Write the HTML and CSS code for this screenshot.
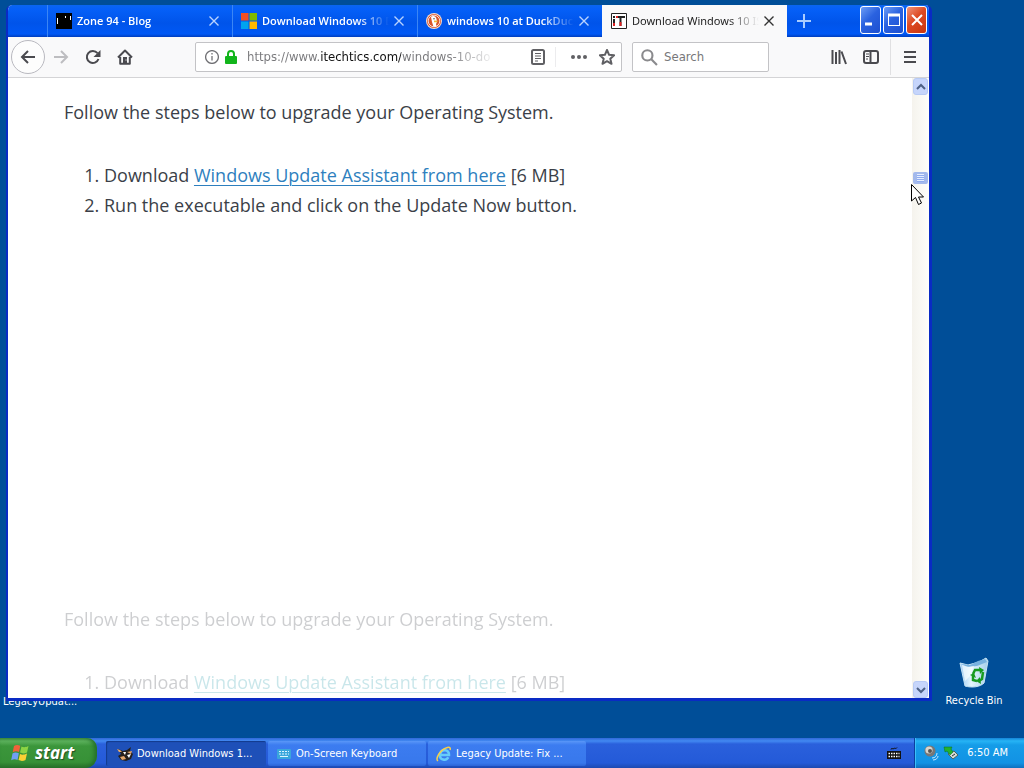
FILE: index.html
```html
<!DOCTYPE html>
<html lang="en">
<head>
<meta charset="utf-8">
<meta name="viewport" content="width=device-width, initial-scale=1">
<title>Download Windows 10 ISO</title>
<link rel="stylesheet" href="styles.css">
</head>
<body>
<main class="desktop">
  <span class="shortcut-legacy">LegacyUpdat...</span>
  <section class="window">
    <header class="titlebar">
      <div class="tabs">
        <div class="tab">
          <button class="tab-label">
            <svg class="favicon" viewBox="0 0 16 16"><path fill="#000" d="M0 0h16v16H0z"/><path stroke="#fff" d="M1.500 5v6M9.500 3v2M14.500 3v4"/></svg>
            <span class="tab-title">Zone 94 - Blog</span>
          </button>
          <button class="tab-close" aria-label="Close tab"><svg viewBox="0 0 10 10"><path d="M.5.5l9 9M9.500.5l-9 9"/></svg></button>
        </div>
        <div class="tab">
          <button class="tab-label">
            <svg class="favicon" viewBox="0 0 16 16"><path fill="#f25022" d="M0 0h7.500v7.500H0z"/><path fill="#7fba00" d="M8.500 0H16v7.500H8.500z"/><path fill="#00a4ef" d="M0 8.500h7.500V16H0z"/><path fill="#ffb900" d="M8.500 8.500H16V16H8.500z"/></svg>
            <span class="tab-title">Download Windows 10 Dis</span>
          </button>
          <button class="tab-close" aria-label="Close tab"><svg viewBox="0 0 10 10"><path d="M.5.5l9 9M9.500.5l-9 9"/></svg></button>
        </div>
        <div class="tab">
          <button class="tab-label">
            <svg class="favicon" viewBox="0 0 16 16"><circle cx="8" cy="8" r="8" fill="#f7ddd0"/><circle cx="8" cy="8" r="7" fill="#d9542b"/><circle cx="8" cy="8" r="5.800" fill="none" stroke="#fff" stroke-width=".8"/><path fill="#fff" d="M5 4c2-2 5-1 5.500 2l.5 3-1 2 .5 2.500-3 .3L6 9z"/><path fill="#f3b632" d="M8 7.500l4 .3-1 1.500H8z"/><circle cx="8" cy="5.700" r=".7" fill="#333"/></svg>
            <span class="tab-title">windows 10 at DuckDuckG</span>
          </button>
          <button class="tab-close" aria-label="Close tab"><svg viewBox="0 0 10 10"><path d="M.5.5l9 9M9.500.5l-9 9"/></svg></button>
        </div>
        <div class="tab tab-active">
          <button class="tab-label">
            <svg class="favicon" viewBox="0 0 16 16"><path fill="#fff" stroke="#222" d="M.5.5h15v15H.5z"/><path fill="#222" d="M2 3h2v2H2zM2 6h2v7H2zM5 3h9v2h-3.500v8h-2V5H5z"/><path fill="#d22" d="M2 10h2v3H2zM8.500 9h2v4h-2zM5 3h2v2H5z"/></svg>
            <span class="tab-title">Download Windows 10 ISO</span>
          </button>
          <button class="tab-close" aria-label="Close tab"><svg viewBox="0 0 10 10"><path d="M.5.5l9 9M9.500.5l-9 9"/></svg></button>
        </div>
        <button class="new-tab" aria-label="New tab"><svg viewBox="0 0 14 14"><path d="M7 0v14M0 7h14"/></svg></button>
      </div>
      <div class="controls">
        <button class="control" aria-label="Minimize"><svg viewBox="0 0 16 20"><path d="M2 14h7" stroke-width="3"/></svg></button>
        <button class="control" aria-label="Maximize"><svg viewBox="0 0 16 20"><path d="M2.500 15.500v-11M2 15.500h12M13.500 4.500v11" stroke-width="1"/><path d="M2 5h12" stroke-width="3"/></svg></button>
        <button class="control control-close" aria-label="Close"><svg viewBox="0 0 16 20"><path d="M3 5l10 10M13 5L3 15" stroke-width="2"/></svg></button>
      </div>
    </header>

    <nav class="toolbar">
      <button class="tool tool-back" aria-label="Back"><svg viewBox="0 0 16 16"><path d="M15 8H2M8 2L2 8l6 6"/></svg></button>
      <button class="tool tool-off" aria-label="Forward"><svg viewBox="0 0 16 16"><path d="M1 8h13M8 2l6 6-6 6"/></svg></button>
      <button class="tool" aria-label="Reload"><svg viewBox="0 0 16 16"><path d="M12.500 4.200A6 6 0 1 0 13.500 10"/><path class="solid" d="M15.500 1v7h-7z"/></svg></button>
      <button class="tool" aria-label="Home"><svg viewBox="0 0 16 16"><path d="M1 8.500L8 1.500l7 7M3.200 8v6.800h9.600V8" stroke-linejoin="round"/><path class="solid" d="M6 8h4v7H6z"/><path d="M8.500 11h1" stroke="#fff" stroke-width="1"/></svg></button>
      <span class="spacer"></span>
      <div class="urlbar">
        <svg class="info" viewBox="0 0 14 14"><circle cx="7" cy="7" r="6.400"/><path d="M7 6v4.500M7 3v1.500"/></svg>
        <svg class="lock" viewBox="0 0 12 14"><path d="M3 7V4a3 3 0 0 1 6 0v3" fill="none" stroke="#12b51b" stroke-width="2"/><rect y="6" width="12" height="8" rx="1" fill="#12b51b"/></svg>
        <input class="url" type="text" aria-label="Address" value="https://www.itechtics.com/windows-10-do">
        <button class="url-tool" aria-label="Reader view"><svg viewBox="0 0 16 16"><rect x="2" y="1" width="12" height="14" rx="1.500"/><path d="M5 4.500h6M5 7h6M5 9.500h6M5 12h3" stroke-width="1"/></svg></button>
        <span class="url-line"></span>
        <button class="url-tool" aria-label="Page actions"><svg viewBox="0 0 16 16"><g class="solid"><circle cx="2" cy="8" r="2"/><circle cx="8" cy="8" r="2"/><circle cx="14" cy="8" r="2"/></g></svg></button>
        <button class="url-tool" aria-label="Bookmark"><svg viewBox="0 0 16 16"><path stroke-linejoin="round" d="M8 1l2.100 4.800 5 .5-3.800 3.500 1.200 5L8 12.200l-4.500 2.600 1.200-5L.9 6.300l5-.5z"/></svg></button>
      </div>
      <label class="search">
        <svg viewBox="0 0 16 16"><circle cx="6" cy="6" r="4.800"/><path d="M9.500 9.500L15 15"/></svg>
        <input type="search" placeholder="Search" aria-label="Search">
      </label>
      <span class="spacer"></span>
      <button class="tool" aria-label="Library"><svg viewBox="0 0 16 16"><path d="M1.500 1v14M5 3v12M8.500 1v14M10.500 2.500L15 15"/></svg></button>
      <button class="tool" aria-label="Sidebars"><svg viewBox="0 0 16 16"><rect x="1" y="2" width="14" height="12" rx="2"/><path d="M7.500 2v12"/><path d="M3 5h3M3 7.500h3M3 10h2" stroke-width="1"/></svg></button>
      <span class="menu-line"></span>
      <button class="tool" aria-label="Menu"><svg viewBox="0 0 16 16"><path d="M2 3h12M2 8h12M2 13h12"/></svg></button>
    </nav>

    <div class="viewport">
      <article class="page">
        <p>Follow the steps below to upgrade your Operating System.</p>
        <ol>
          <li>Download <a href="#">Windows Update Assistant from here</a> [6 MB]</li>
          <li>Run the executable and click on the Update Now button.</li>
        </ol>
        <div class="ghost" aria-hidden="true">
          <p>Follow the steps below to upgrade your Operating System.</p>
          <ol>
            <li>Download <a href="#" tabindex="-1">Windows Update Assistant from here</a> [6 MB]</li>
          </ol>
        </div>
      </article>
      <div class="scrollbar">
        <button class="scroll-button" aria-label="Scroll up"><svg viewBox="0 0 10 10"><path d="M1 7l4-4 4 4"/></svg></button>
        <div class="track"><span class="thumb"></span></div>
        <button class="scroll-button" aria-label="Scroll down"><svg viewBox="0 0 10 10"><path d="M1 3l4 4 4-4"/></svg></button>
      </div>
    </div>
  </section>

  <a class="recycle" href="#">
    <svg viewBox="0 0 32 34">
      <defs><linearGradient id="bin" x2="1"><stop stop-color="#9cc9f5"/><stop offset=".4" stop-color="#e4f5fc"/><stop offset="1" stop-color="#a6cfea"/></linearGradient></defs>
      <path fill="url(#bin)" stroke="#c6e4f5" d="M2 7l8 2 11-3 7-4 2 3-4 22c-4 4-12 5-19 3z"/>
      <path fill="#78b2df" d="M3 8l9 1 8-4 7-2 2 3-10 4-10 1z"/>
      <path fill="#f6fdff" d="M4 9l7 2 5-1-4 10-5 5z" opacity=".7"/>
      <g fill="none" stroke="#189a20" stroke-width="2.500"><path d="M15 18l2-4 6 0M25 16l-1 7-3 2M19 25l-4-1 0-4"/></g>
      <path fill="#189a20" d="M21 11l5 3-4 4zM22 21l-4 4 5 3zM12 19l4-2 2 5z"/>
    </svg>
    <span>Recycle Bin</span>
  </a>
  <svg class="cursor" viewBox="0 0 14 22"><path fill="#fff" stroke="#000" d="M.5.5v16.500l4-3.500 3 7 3-1.500-3-6h5z"/></svg>
</main>

<footer class="taskbar">
  <button class="start">
    <svg viewBox="0 0 20 20"><path fill="#f0623a" d="M3 3c2-1.500 4-1.300 6.300-.2L8 9c-2-1-4-1-6.300.2z"/><path fill="#8bd344" d="M10.500 3.500c2 1 4 1 7-.5L16 9.500c-2.500 1.200-4.500 1.200-7 .1z"/><path fill="#6f9ff5" d="M1.500 10.500c2-1.500 4-1.300 6.300-.2L6.500 17c-2-1-4-1-6.300.2z"/><path fill="#fbd034" d="M9 11c2 1 4 1 7-.5L14.500 17c-2.500 1.200-4.500 1.200-7 .1z"/></svg>
    <span>start</span>
  </button>
  <div class="tasks">
    <button class="task task-active">
      <svg viewBox="0 0 16 16"><path fill="#26201c" d="M1 3l5 2 4-1 4-3-1 4 3 3-2 5-5 2-5-1-3-4 3-2z"/><path fill="#e5a66a" d="M0 3l3 1 2 2-3 0zM10 6l5-1-1 3zM3 11l4-1 2 3-4 1z"/><path fill="#fff" d="M6 6l3 0-1 3zM10 9l4-1-2 4z"/></svg>
      <span>Download Windows 1...</span>
    </button>
    <button class="task">
      <svg viewBox="0 0 16 16"><rect x="1" y="3" width="14" height="10" rx="1" fill="#3aa6dc"/><path stroke="#dff6ff" stroke-dasharray="2 1" d="M3 5.500h10M3 8h10"/><path stroke="#dff6ff" d="M4 10.500h8"/></svg>
      <span>On-Screen Keyboard</span>
    </button>
    <button class="task">
      <svg viewBox="0 0 16 16"><path fill="none" stroke="#67cdfa" stroke-width="2.600" d="M4 9h9c.5-6-8-6.500-9-.5-.8 6 6.500 6.500 8.300 2.800"/><path fill="none" stroke="#f6cf4c" stroke-width="1.500" d="M2 15c-3-2 2-11 8-13 3-1.200 5-.8 4 2"/></svg>
      <span>Legacy Update: Fix ...</span>
    </button>
  </div>
  <button class="keyboard" aria-label="Keyboard"><svg viewBox="0 0 14 14"><path fill="none" stroke="#111" d="M4 3.500c0-2 2 0 3-1s2 1 3-1"/><path fill="#111" d="M0 5h14v8H0z"/><path stroke="#fff" stroke-width="1.500" stroke-dasharray="1.500 1" d="M1.500 7.500h11M1.500 10.500h11"/></svg></button>
  <div class="tray">
    <svg viewBox="0 0 16 16"><circle cx="7" cy="6" r="5.500" fill="#777"/><circle cx="6" cy="5" r="3.600" fill="#d8d5cc"/><circle cx="7" cy="6" r="2" fill="#555"/><path fill="none" stroke="#c8e8ff" d="M9 13c3 0 5-2 5-5M10 15c3 0 5-2 5-4"/></svg>
    <svg viewBox="0 0 16 16"><path fill="#d4dcd6" stroke="#52655b" d="M5 9l6-3 4 4-5 4z"/><path fill="#23b32d" stroke="#0b6e1c" stroke-width=".5" d="M1 2l8 0-1 2 2 3-3 3-3-4-2 1z"/><path stroke="#333" d="M9 11l3-2"/></svg>
    <time>6:50 AM</time>
  </div>
</footer>
</body>
</html>
```
FILE: styles.css
```css
* { box-sizing: border-box; }
html, body { height: 100%; }
body {
  margin: 0;
  display: flex;
  flex-direction: column;
  overflow: hidden;
  background: #004e98;
  font: 11px/16px "DejaVu Sans Condensed", "Noto Sans", sans-serif;
}
button {
  display: flex;
  align-items: center;
  justify-content: center;
  padding: 0;
  border: 0;
  background: none;
  color: inherit;
  font: inherit;
}
svg { flex: none; display: block; }
input { min-width: 0; padding: 0; border: 0; outline: 0; background: none; }

.desktop { position: relative; flex: 1; min-height: 0; }
.shortcut-legacy { position: absolute; left: 3px; bottom: 28px; color: #fff; }

/* Browser window */
.window {
  position: absolute;
  inset: 5px 92px 37px 6px;
  display: flex;
  flex-direction: column;
  overflow: hidden;
  border: solid #0a2bc4;
  border-width: 0 3px 3px 2px;
  border-radius: 6px 6px 0 0;
  background: #fff;
}
.titlebar {
  flex: none;
  display: flex;
  justify-content: space-between;
  height: 32px;
  padding-left: 39px;
  background: linear-gradient(#0a66f0, #0560f8 4px, #0054ea 18px, #0058f5 29px, #003dbd);
  color: #fff;
}
.tabs { display: flex; flex: 1; min-width: 0; }
.tab {
  display: flex;
  align-items: center;
  flex: 0 1 185px;
  min-width: 0;
  padding: 0 8px;
  border-left: 1px solid #3b86f5;
}
.tab-label { flex: 1; min-width: 0; gap: 5px; }
.favicon { width: 16px; height: 16px; }
.tab-title {
  flex: 1;
  overflow: hidden;
  text-align: left;
  white-space: nowrap;
  font: 600 11px/16px "Open Sans", sans-serif;
  -webkit-mask-image: linear-gradient(90deg, #000 calc(100% - 32px), transparent);
  mask-image: linear-gradient(90deg, #000 calc(100% - 32px), transparent);
}
.tab-close { width: 20px; height: 20px; }
.tab-close svg { width: 10px; height: 10px; fill: none; stroke: #b9d4ff; stroke-width: 1.400; }
.tab-active { border-color: #f9f9fa; background: #f9f9fa; color: #222; }
.tab-active .tab-title { font: 11px/16px "Noto Sans", sans-serif; }
.tab-active .tab-close svg { stroke: #333; }
.new-tab { width: 34px; height: 31px; }
.new-tab svg { width: 14px; height: 14px; stroke: #a9ccff; stroke-width: 2; }

.controls { display: flex; gap: 2px; padding: 1px 2px 0 0; }
.control {
  width: 21px;
  height: 28px;
  border: 1px solid #fff;
  border-radius: 3px;
  background: linear-gradient(135deg, #6d9df5, #2a62e0 45%, #1d4fd0);
}
.control svg { width: 16px; height: 20px; fill: none; stroke: #fff; }
.control-close { background: linear-gradient(135deg, #f0937a, #dd4a22 45%, #c8350f); }

.toolbar {
  flex: none;
  display: flex;
  align-items: center;
  height: 41px;
  padding: 0 3px;
  border-bottom: 1px solid #d4d4d6;
  background: #f9f9fa;
  color: #4a4a4f;
}
.tool { flex: none; width: 32px; height: 32px; }
.tool svg, .url-tool svg { width: 16px; height: 16px; fill: none; stroke: currentColor; stroke-width: 2; }
.tool .solid, .url-tool .solid { fill: currentColor; stroke: none; }
.tool-back { width: 34px; height: 34px; border: 1px solid #b9b9c0; border-radius: 50%; background: #fdfdfd; }
.tool-off { color: #bdbdc0; }
.spacer { flex: 0 1 54px; }
.urlbar, .search {
  display: flex;
  align-items: center;
  height: 30px;
  border: 1px solid #c3c3c6;
  border-radius: 2px;
  background: #fff;
}
.urlbar { flex: 1; min-width: 0; gap: 6px; padding: 0 3px 0 9px; color: #606064; }
.info { width: 14px; height: 14px; fill: none; stroke: #707074; stroke-width: 1.300; }
.lock { width: 12px; height: 14px; }
.url {
  flex: 1;
  margin: 0 28px 0 4px;
  font: 13px/20px "DejaVu Sans Condensed", sans-serif;
  color: transparent;
  background: linear-gradient(90deg, #77777a 74px, #111 74px, #111 154px, #77777a 154px, #77777a 200px, #fff 250px);
  -webkit-background-clip: text;
  background-clip: text;
}
.url-tool { flex: none; width: 22px; height: 24px; }
.url-line { width: 1px; height: 20px; margin-right: 6px; background: #ececee; }
.search { flex: 0 1 137px; min-width: 0; gap: 6px; margin-left: 10px; padding: 0 8px; }
.search svg { width: 17px; height: 17px; fill: none; stroke: #8a8a8d; stroke-width: 2; }
.search input { flex: 1; width: 0; font: 13px/20px "DejaVu Sans Condensed", sans-serif; }
.search input::placeholder { color: #77777a; }
.menu-line { width: 1px; height: 36px; margin: 0 3px; background: #e0e0e2; }

/* Web page */
.viewport { flex: 1; display: flex; min-height: 0; }
.page {
  flex: 1;
  min-width: 0;
  overflow: hidden;
  padding: 19px 56px 0;
  color: #3b3f48;
  font: 18px/30px "Open Sans", sans-serif;
}
.page p { margin: 0 0 33px; }
.page ol { margin: 0; padding-left: 40px; }
.page a { color: #2e7fbe; text-underline-offset: 3px; text-decoration-thickness: 1px; }
.ghost { margin-top: 384px; opacity: .25; }
.ghost a { color: #2e9fae; }

.scrollbar {
  flex: none;
  display: flex;
  flex-direction: column;
  width: 17px;
  background: linear-gradient(90deg, #f5f3ed, #fefefb);
}
.scroll-button {
  width: 15px;
  height: 17px;
  margin: 0 1px;
  border: 1px solid #b7caf5;
  border-radius: 3px;
  background: #c6d5fb;
}
.scroll-button svg { width: 10px; height: 10px; fill: none; stroke: #4d6185; stroke-width: 2; }
.track { flex: 1; padding: 77px 1px 0; }
.thumb {
  display: block;
  height: 12px;
  border: solid #a3b9ec;
  border-width: 2px 4px;
  border-radius: 2px;
  background: repeating-linear-gradient(#e4edff 0 1px, #8fabef 1px 2px);
}

.recycle {
  position: absolute;
  right: 12px;
  bottom: 29px;
  display: flex;
  flex-direction: column;
  align-items: center;
  gap: 3px;
  width: 76px;
  color: #fff;
  text-decoration: none;
}
.recycle svg { width: 32px; height: 34px; }
.cursor { position: absolute; left: 911px; top: 184px; width: 14px; height: 22px; }

/* Taskbar */
.taskbar {
  flex: none;
  display: flex;
  height: 30px;
  background: linear-gradient(#2f68d8, #4289f2 3px, #2a60dc 6px, #245ad8 25px, #1d49b0);
  color: #fff;
}
.start {
  gap: 4px;
  width: 97px;
  padding-right: 12px;
  border-radius: 0 10px 12px 0;
  background: linear-gradient(#4a9a4a, #5eb35e 3px, #3b963b 8px, #379137 24px, #2a702a);
  box-shadow: inset -3px 0 4px #24702a;
  font: italic bold 17px/24px "Open Sans", sans-serif;
  text-shadow: 1px 1px 1px #234f23;
}
.start svg { width: 20px; height: 20px; }
.tasks { flex: 1; display: flex; gap: 2px; min-width: 0; padding: 3px 0 2px 9px; }
.task {
  flex: 0 1 158px;
  min-width: 0;
  justify-content: flex-start;
  gap: 4px;
  padding: 0 8px;
  border-radius: 2px;
  background: linear-gradient(#5a97f8, #3c7cf0 4px, #3878ec 22px, #2c64d6);
  white-space: nowrap;
}
.task-active {
  flex-basis: 160px;
  padding-left: 11px;
  background: #1e50b8;
  box-shadow: inset 1px 1px 1px #123a8c;
}
.task svg { width: 16px; height: 16px; }
.keyboard { width: 40px; }
.keyboard svg { width: 14px; height: 14px; }
.tray {
  display: flex;
  align-items: center;
  gap: 4px;
  width: 110px;
  padding: 0 16px 0 8px;
  border-left: 1px solid #0b3f9e;
  background: linear-gradient(#1583d8, #26b4f5 3px, #159ce8 7px, #1292e4 25px, #0f70be);
  box-shadow: inset 1px 0 #3cc0f8;
}
.tray svg { width: 16px; height: 16px; }
.tray time { margin-left: auto; white-space: nowrap; }
```
